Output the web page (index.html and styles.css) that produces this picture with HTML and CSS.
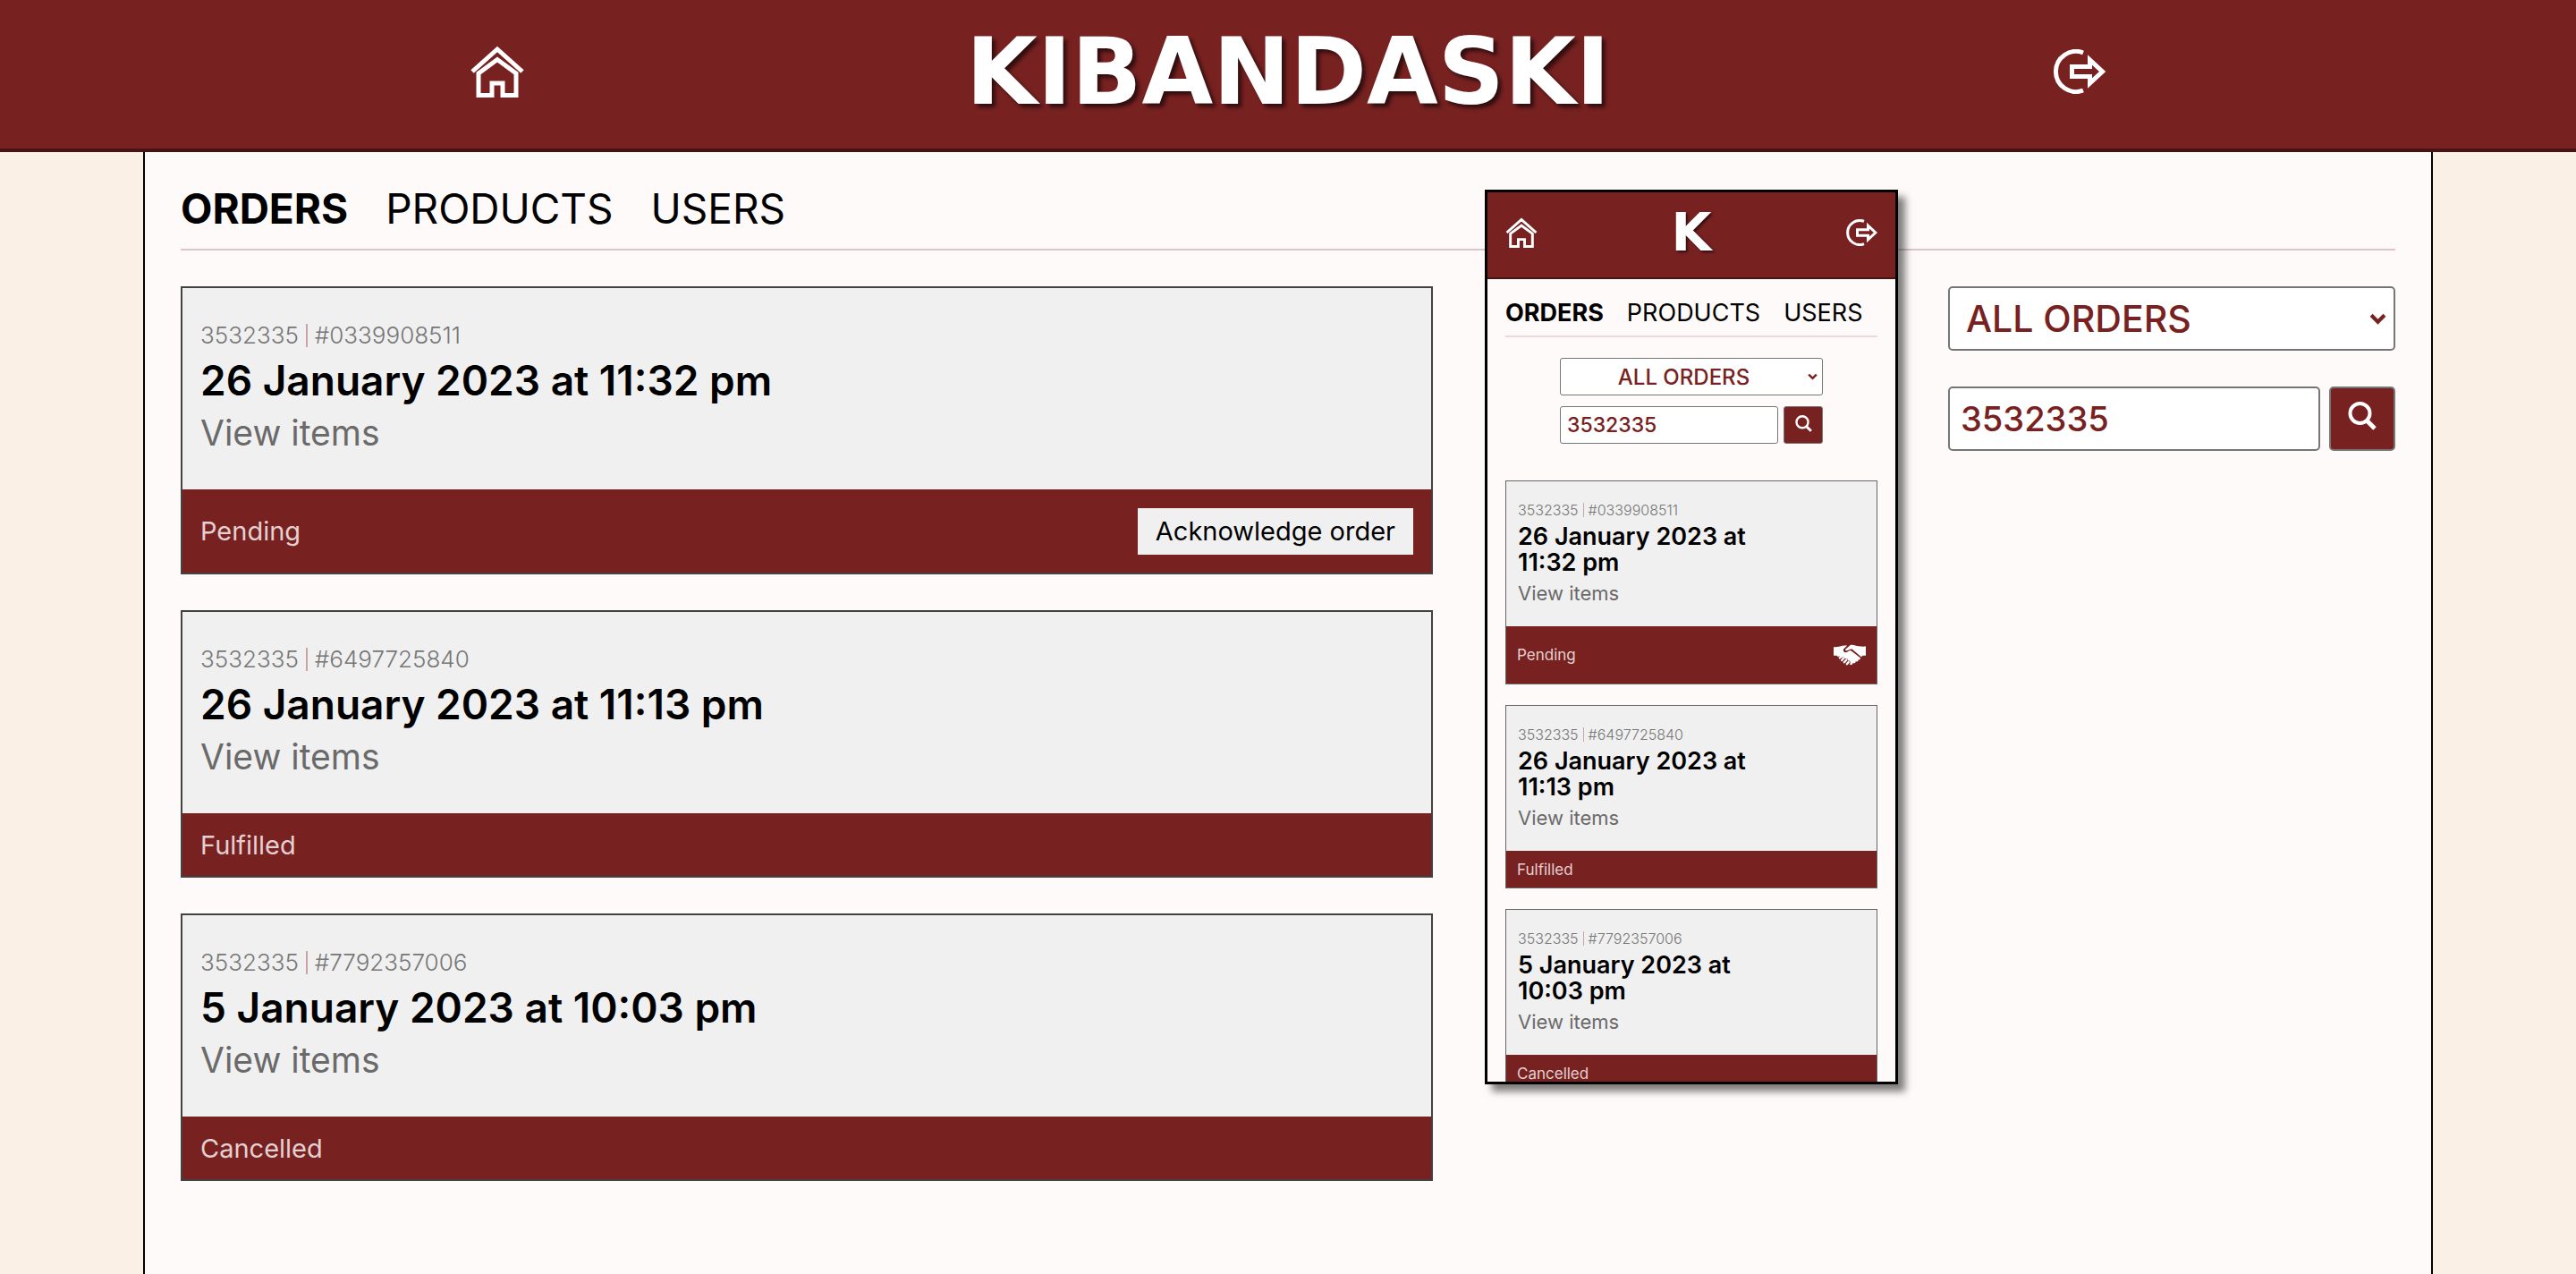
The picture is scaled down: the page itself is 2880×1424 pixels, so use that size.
FILE: index.html
```html
<!DOCTYPE html>
<html lang="en">
<head>
<meta charset="utf-8">
<meta name="viewport" content="width=device-width, initial-scale=1">
<title>Kibandaski – Orders</title>
<link rel="stylesheet" href="styles.css">
</head>
<body>
<svg class="sprite" aria-hidden="true">
  <symbol id="home" viewBox="0 0 60 58">
    <path d="M2 29 30 4 58 29M9 55.500V31L30 15.500 51 31V55.500H36V42H24V55.500Z" fill="none" stroke="currentColor" stroke-width="5"/>
  </symbol>
  <symbol id="logout" viewBox="0 0 60 50">
    <path d="M35 4A22.500 22.500 0 1 0 35 46M22.500 19.500H42.500V12L56.500 25 42.500 38V30.500H22.500Z" fill="none" stroke="currentColor" stroke-width="5"/>
  </symbol>
  <symbol id="search" viewBox="0 0 32 32">
    <circle cx="13.500" cy="13" r="11" fill="none" stroke="currentColor" stroke-width="4"/>
    <path d="M21 21 30 30" fill="none" stroke="currentColor" stroke-width="5"/>
  </symbol>
  <symbol id="handshake" viewBox="0 0 640 432">
    <path fill="currentColor" d="M0 50C110 62 150 5 270 22L198 90C180 125 210 165 260 155L325 120 350 125 525 262C545 285 520 315 490 300 500 330 470 350 440 335 440 365 410 380 385 365 375 405 340 415 318 395 350 360 325 320 290 325 290 285 255 265 225 285 215 245 175 240 155 265 145 225 110 225 90 245L60 222H0ZM335 10C390-5 440 30 500 35 560 45 600 42 640 40V222H580L550 245 370 95C340 80 300 120 250 122 230 122 225 105 240 92Z"/>
    <path d="M122 268 145 245M165 315 195 275M212 355 255 305M265 390 298 350" stroke="currentColor" stroke-width="42" stroke-linecap="round"/>
  </symbol>
</svg>

<header class="topbar">
  <a class="icon-link" href="#home" aria-label="Home"><svg class="icon-home"><use href="#home"/></svg></a>
  <h1 class="brand">KIBANDASKI</h1>
  <a class="icon-link" href="#logout" aria-label="Log out"><svg class="icon-logout"><use href="#logout"/></svg></a>
</header>

<main class="page">
  <nav class="tabs">
    <a class="tab active" href="#orders">ORDERS</a>
    <a class="tab" href="#products">PRODUCTS</a>
    <a class="tab" href="#users">USERS</a>
  </nav>
  <div class="columns">
    <section class="orders">
      <article class="card">
        <div class="details">
          <p class="meta">3532335<span class="bar"></span>#0339908511</p>
          <h2 class="date">26 January 2023 at 11:32 pm</h2>
          <a class="view" href="#items-1">View items</a>
        </div>
        <div class="status pending">Pending<button class="ack" type="button">Acknowledge order</button></div>
      </article>
      <article class="card">
        <div class="details">
          <p class="meta">3532335<span class="bar"></span>#6497725840</p>
          <h2 class="date">26 January 2023 at 11:13 pm</h2>
          <a class="view" href="#items-2">View items</a>
        </div>
        <div class="status">Fulfilled</div>
      </article>
      <article class="card">
        <div class="details">
          <p class="meta">3532335<span class="bar"></span>#7792357006</p>
          <h2 class="date">5 January 2023 at 10:03 pm</h2>
          <a class="view" href="#items-3">View items</a>
        </div>
        <div class="status">Cancelled</div>
      </article>
    </section>
    <form class="filters">
      <div class="select-wrap">
        <select class="field" aria-label="Order status"><option>ALL ORDERS</option></select>
        <svg class="chevron" viewBox="0 0 18 12"><path d="M2 2 9 9 16 2" fill="none" stroke="currentColor" stroke-width="4"/></svg>
      </div>
      <div class="search-row">
        <input class="field" type="text" value="3532335" aria-label="Search orders">
        <button class="search" type="button" aria-label="Search"><svg class="icon-search"><use href="#search"/></svg></button>
      </div>
    </form>
  </div>

  <aside class="phone" aria-label="Mobile view">
    <header class="topbar">
      <a class="icon-link" href="#home" aria-label="Home"><svg class="icon-home"><use href="#home"/></svg></a>
      <h2 class="brand">K</h2>
      <a class="icon-link" href="#logout" aria-label="Log out"><svg class="icon-logout"><use href="#logout"/></svg></a>
    </header>
    <nav class="tabs">
      <a class="tab active" href="#orders">ORDERS</a>
      <a class="tab" href="#products">PRODUCTS</a>
      <a class="tab" href="#users">USERS</a>
    </nav>
    <form class="filters">
      <div class="select-wrap">
        <select class="field" aria-label="Order status"><option>ALL ORDERS</option></select>
        <svg class="chevron" viewBox="0 0 18 12"><path d="M2 2 9 9 16 2" fill="none" stroke="currentColor" stroke-width="4"/></svg>
      </div>
      <div class="search-row">
        <input class="field" type="text" value="3532335" aria-label="Search orders">
        <button class="search" type="button" aria-label="Search"><svg class="icon-search"><use href="#search"/></svg></button>
      </div>
    </form>
    <section class="orders">
      <article class="card">
        <div class="details">
          <p class="meta">3532335<span class="bar"></span>#0339908511</p>
          <h3 class="date">26 January 2023 at<br>11:32 pm</h3>
          <a class="view" href="#items-1">View items</a>
        </div>
        <div class="status pending">Pending<button class="shake" type="button" aria-label="Acknowledge order"><svg class="icon-shake"><use href="#handshake"/></svg></button></div>
      </article>
      <article class="card">
        <div class="details">
          <p class="meta">3532335<span class="bar"></span>#6497725840</p>
          <h3 class="date">26 January 2023 at<br>11:13 pm</h3>
          <a class="view" href="#items-2">View items</a>
        </div>
        <div class="status">Fulfilled</div>
      </article>
      <article class="card">
        <div class="details">
          <p class="meta">3532335<span class="bar"></span>#7792357006</p>
          <h3 class="date">5 January 2023 at<br>10:03 pm</h3>
          <a class="view" href="#items-3">View items</a>
        </div>
        <div class="status">Cancelled</div>
      </article>
    </section>
  </aside>
</main>
</body>
</html>
```
FILE: styles.css
```css
* { box-sizing: border-box; }

:root {
  --maroon: #782121;
  --maroon-dark: #471414;
  --paper: #fffafa;
}

body {
  margin: 0;
  min-height: 100vh;
  display: flex;
  flex-direction: column;
  background: #fbf0e6;
  color: #000;
  font-family: Inter, "Liberation Sans", sans-serif;
}

h1, h2, h3, p { margin: 0; }
a { color: inherit; text-decoration: none; }
svg { display: block; }
button, select, input { font-family: inherit; }
.sprite { position: absolute; width: 0; height: 0; }

.topbar {
  display: flex;
  justify-content: space-evenly;
  align-items: center;
  height: 170px;
  padding: 0 32px 6px;
  background: var(--maroon);
  border-bottom: 4px solid var(--maroon-dark);
  color: #fff;
}
.brand {
  font: 700 103px/1 "DejaVu Sans", sans-serif;
  text-shadow: 4px 4px 4px rgba(0, 0, 0, .6);
}
.icon-home { width: 60px; height: 58px; }
.icon-logout { width: 60px; height: 50px; }

.page {
  position: relative;
  flex: 1;
  width: calc(100% - 320px);
  max-width: 2560px;
  margin: 0 auto;
  padding: 0 40px;
  background: var(--paper);
  border: solid #000;
  border-width: 0 2px;
}
.tabs {
  display: flex;
  gap: 42px;
  height: 110px;
  padding-top: 34px;
  border-bottom: 2px solid #ddc4c6;
  font-size: 46px;
  line-height: 58px;
}
.active { font-weight: 700; }

.columns {
  display: flex;
  justify-content: space-between;
  align-items: flex-start;
  padding: 40px 0;
}
.orders {
  display: flex;
  flex-direction: column;
  gap: 40px;
}
.columns .orders { width: 1400px; }
.card { border: 2px solid #424242; background: #f0f0f0; }
.details { height: 225px; padding: 36px 20px 0; }
.meta {
  display: flex;
  align-items: center;
  gap: 8px;
  font-size: 26px;
  line-height: 34px;
  font-weight: 300;
  color: #777;
}
.bar { width: 2px; height: 26px; background: #c9a5a5; }
.date { font-size: 46px; line-height: 66px; font-weight: 600; }
.view { font-size: 39px; line-height: 52px; color: #6a6a6a; }
.status {
  display: flex;
  justify-content: space-between;
  align-items: center;
  height: 70px;
  padding: 0 20px;
  background: var(--maroon);
  color: #e4d0d0;
  font-size: 29px;
}
.status.pending { height: 93px; }
.ack {
  height: 52px;
  padding: 0 20px;
  border: 0;
  background: #f0f0f0;
  color: #000;
  font-size: 29px;
}

.filters {
  display: flex;
  flex-direction: column;
  gap: 40px;
  width: 500px;
}
.select-wrap { position: relative; }
.field {
  display: block;
  width: 100%;
  min-width: 0;
  height: 72px;
  padding: 0 12px;
  appearance: none;
  background: #fff;
  border: 2px solid #767676;
  border-radius: 5px;
  color: var(--maroon);
  font-size: 38px;
  font-weight: 500;
}
select.field { padding: 0 18px; font-size: 41px; }
.chevron {
  position: absolute;
  right: 10px;
  top: 30px;
  width: 19px;
  height: 13px;
  color: var(--maroon);
}
.search-row { display: flex; gap: 10px; }
.search {
  flex: none;
  display: grid;
  place-items: center;
  width: 74px;
  padding: 0 0 6px;
  background: var(--maroon);
  border: 2px solid #767676;
  border-radius: 5px;
  color: #fff;
}
.icon-search { width: 32px; height: 32px; }

/* Mobile layout shown over the desktop page */
.phone {
  position: absolute;
  top: 42px;
  right: 596px;
  width: 462px;
  height: 1000px;
  overflow: hidden;
  background: var(--paper);
  border: 3px solid #000;
  box-shadow: 8px 8px 8px rgba(0, 0, 0, .5);
}
.phone .topbar {
  justify-content: space-between;
  height: 97px;
  padding: 0 20px 6px;
  border-bottom-width: 2px;
}
.phone .brand { font-size: 58px; text-shadow: 2px 2px 3px rgba(0, 0, 0, .6); }
.phone .icon-home { width: 36px; height: 34px; }
.phone .icon-logout { width: 36px; height: 30px; }
.phone .tabs {
  gap: 26px;
  height: 65px;
  margin: 0 20px;
  padding-top: 20px;
  font-size: 27px;
  line-height: 36px;
  border-color: #ecdadb;
}
.phone .filters { width: 294px; margin: 23px auto 41px; gap: 12px; }
.phone .field {
  height: 42px;
  padding: 0 7px;
  border-width: 1px;
  border-radius: 3px;
  font-size: 23px;
}
.phone select.field { padding-right: 24px; font-size: 24px; text-align: center; text-align-last: center; }
.phone .chevron { right: 6px; top: 17px; width: 11px; height: 8px; }
.phone .search-row { gap: 6px; }
.phone .search { width: 44px; padding-bottom: 4px; border-width: 1px; border-radius: 3px; }
.phone .icon-search { width: 19px; height: 19px; }
.phone .orders { gap: 23px; margin: 0 20px; }
.phone .card { border-width: 1px; border-color: #666; }
.phone .details { height: 162px; padding: 22px 13px 0; }
.phone .meta { gap: 5px; font-size: 16px; line-height: 20px; }
.phone .bar { width: 1px; height: 16px; }
.phone .date { font-size: 27px; line-height: 29px; padding-top: 5px; }
.phone .view { font-size: 22px; line-height: 40px; }
.phone .status { height: 41px; padding: 0 12px; font-size: 17px; }
.phone .status.pending { height: 64px; }
.shake { padding: 0; border: 0; background: none; color: #fff; }
.icon-shake { width: 36px; height: 25px; }
```
